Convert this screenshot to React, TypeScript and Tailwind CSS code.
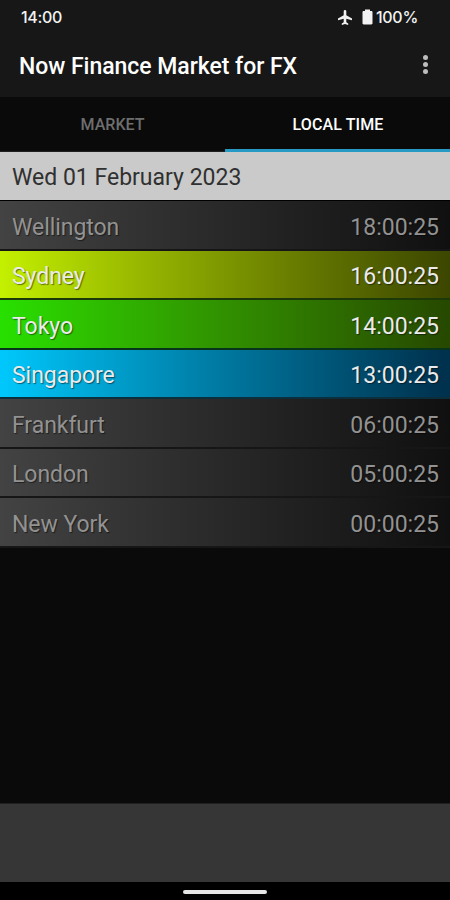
interface MarketClock {
  city: string
  time: string
  open: boolean
  background: string
}

const closedBackground = "bg-linear-to-r from-[#434343] to-[#101010] border-[#161616]"

const clocks: MarketClock[] = [
  { city: "Wellington", time: "18:00:25", open: false, background: closedBackground },
  { city: "Sydney", time: "16:00:25", open: true, background: "bg-linear-to-r from-[#c4f000] to-[#3c4600] border-[#1c3a08]" },
  { city: "Tokyo", time: "14:00:25", open: true, background: "bg-linear-to-r from-[#27e000] to-[#264800] border-[#06351c]" },
  { city: "Singapore", time: "13:00:25", open: true, background: "bg-linear-to-r from-[#00c8fc] to-[#00304c] border-[#0b2f3c]" },
  { city: "Frankfurt", time: "06:00:25", open: false, background: closedBackground },
  { city: "London", time: "05:00:25", open: false, background: closedBackground },
  { city: "New York", time: "00:00:25", open: false, background: closedBackground },
]

function StatusBar() {
  return (
    <div className="flex h-[34px] items-center justify-between pl-[21px] pr-[32px] font-[Inter,sans-serif] text-base font-medium tracking-[-0.3px] text-[#f2f2f2]">
      <span>14:00</span>
      <div className="flex items-center">
        <svg className="mr-[10px] h-[15px] w-[14px]" viewBox="0 0 14 15" fill="currentColor">
          <path d="M7 0c.8 0 1.300.6 1.300 1.400v3.800L14 8.600v1.700L8.300 8.700v3.500l1.900 1.400V15L7 14.100 3.800 15v-1.400l1.900-1.400V8.700L0 10.300V8.600l5.700-3.400V1.400C5.700.6 6.200 0 7 0z" />
        </svg>
        <svg className="mr-[3px] h-4 w-[11px]" viewBox="0 0 11 16" fill="currentColor">
          <path d="M3 .5h5V2h1.300c.8 0 1.200.5 1.200 1.200v11.100c0 .7-.5 1.200-1.200 1.200H1.700c-.7 0-1.200-.5-1.200-1.200V3.200C.5 2.500 1 2 1.700 2H3z" />
        </svg>
        <span>100%</span>
      </div>
    </div>
  )
}

function ClockRow({ clock }: { clock: MarketClock }) {
  return (
    <div
      className={`flex h-[49.5px] items-center justify-between border-b-2 pl-3 pr-[11px] pt-[6px] text-[23px] [text-shadow:1px_1px_1px_rgba(0,0,0,0.5)] ${clock.background} ${
        clock.open ? "text-[#ebebeb]" : "text-[#929292]"
      }`}
    >
      <span className="tracking-[-0.05px]">{clock.city}</span>
      <span>{clock.time}</span>
    </div>
  )
}

export default function App() {
  return (
    <div className="flex h-[900px] w-[450px] flex-col overflow-hidden bg-[#0a0a0a] font-[Roboto,sans-serif]">
      <header className="h-[97px] shrink-0 bg-[#171717]">
        <StatusBar />
        <div className="flex h-[63px] items-center justify-between pl-[19px] pr-[22.5px]">
          <h1 className="pt-1 text-[23px] font-medium tracking-[-0.04px] text-white">Now Finance Market for FX</h1>
          <div className="flex flex-col gap-[2px] pb-[2px]">
            <span className="size-[5px] rounded-full bg-[#bdbdbd]" />
            <span className="size-[5px] rounded-full bg-[#bdbdbd]" />
            <span className="size-[5px] rounded-full bg-[#bdbdbd]" />
          </div>
        </div>
      </header>

      <nav className="grid h-[55px] shrink-0 grid-cols-2 text-center text-base font-medium">
        <div className="flex items-center justify-center border-b border-[#202020] pt-[2px] text-[#6e6e6e]">MARKET</div>
        <div className="flex items-center justify-center border-b-[3px] border-[#269ac5] pl-px pt-1 tracking-[0.1px] text-white">
          LOCAL TIME
        </div>
      </nav>

      <main className="flex-1">
        <div className="flex h-[49.400px] items-center border-b border-black bg-[#cacaca] pl-3 pt-1 text-[23px] text-[#303030]">
          Wed 01 February 2023
        </div>
        {clocks.map((clock) => (
          <ClockRow key={clock.city} clock={clock} />
        ))}
      </main>

      <div className="h-[79px] shrink-0 border-t border-[#202020] bg-[#363636]" />
      <div className="flex h-[18px] shrink-0 justify-center bg-black pt-2">
        <div className="h-1 w-[84px] rounded-full bg-[#e6e6e6]" />
      </div>
    </div>
  )
}
